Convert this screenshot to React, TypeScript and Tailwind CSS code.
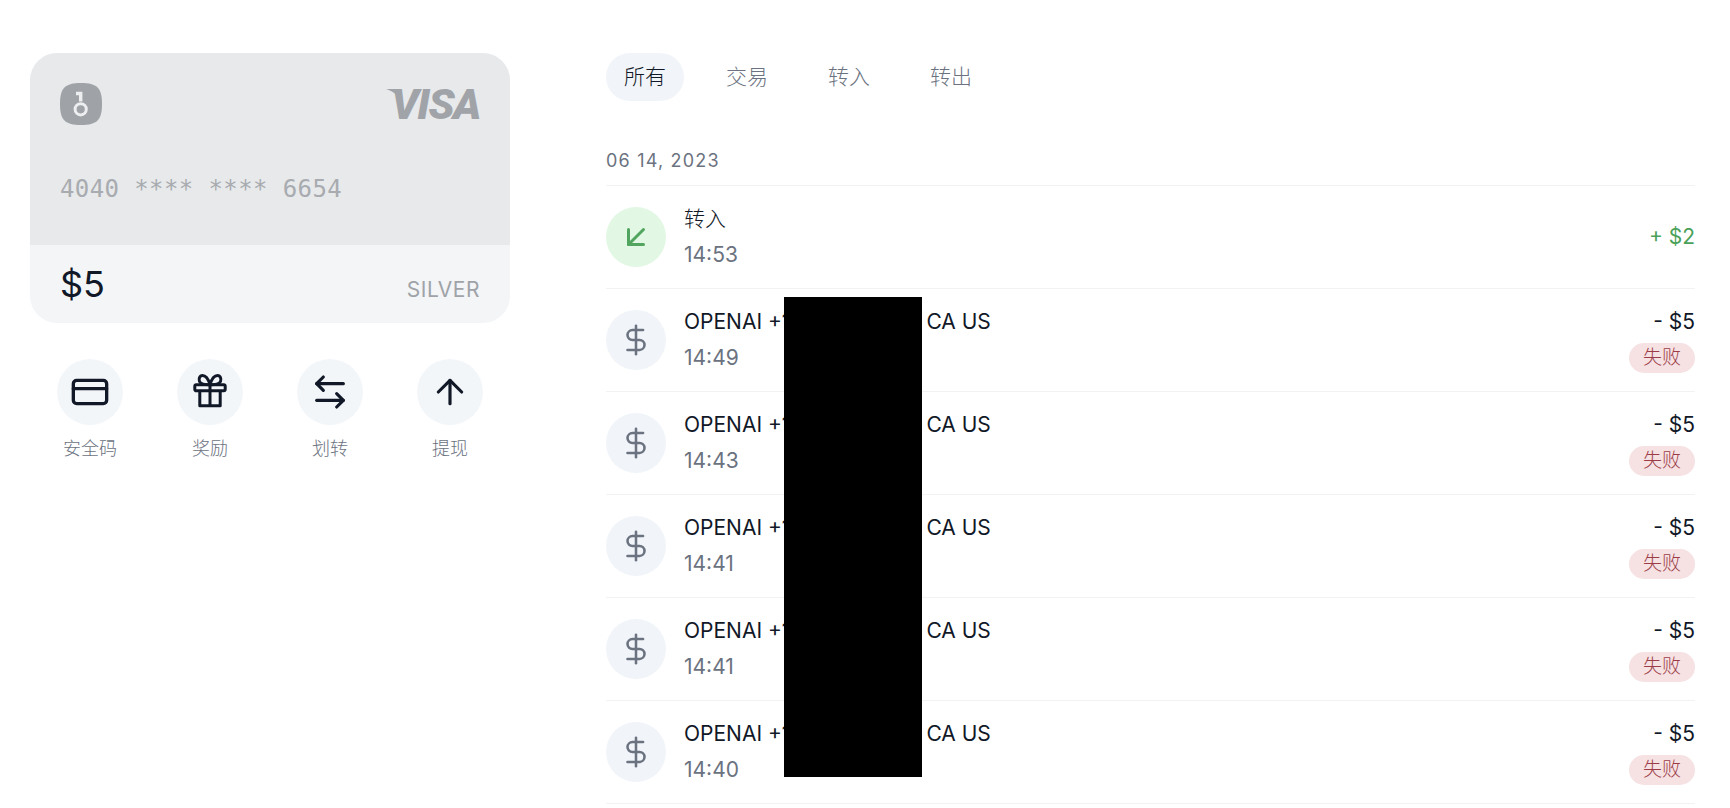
import { ArrowDownLeft, ArrowLeftRight, ArrowUp, CreditCard, DollarSign } from "lucide-react";

function GiftIcon({ className }: { size?: number; strokeWidth?: number; className?: string }) {
  return (
    <svg width="36" height="36" viewBox="0 0 36 36" fill="none" stroke="currentColor" strokeWidth="3" strokeLinejoin="round" className={className}>
      <rect x="2.8" y="10.8" width="30.4" height="6" rx="1.5" />
      <path d="M7.8 16.8V31.8H28.2V16.8" />
      <path d="M18 10.8V31.8" />
      <path d="M18 10.8C16 4 13 1.6 10.5 1.6C7.5 1.6 6.5 5 7.5 7.5C8.5 10 11 10.8 18 10.8Z" />
      <path d="M18 10.8C20 4 23 1.6 25.5 1.6C28.5 1.6 29.5 5 28.5 7.5C27.5 10 25 10.8 18 10.8Z" />
    </svg>
  );
}

const actions = [
  { label: "安全码", icon: CreditCard, stroke: 2 },
  { label: "奖励", icon: GiftIcon, stroke: 2 },
  { label: "划转", icon: ArrowLeftRight, stroke: 1.9 },
  { label: "提现", icon: ArrowUp, stroke: 1.9 },
];

const tabs = ["所有", "交易", "转入", "转出"];

const payments = ["14:49", "14:43", "14:41", "14:41", "14:40"];

function KeyLogo() {
  return (
    <svg width="42" height="42" viewBox="0 0 42 42" fill="none">
      <path d="M21 0C37 0 42 5 42 21C42 37 37 42 21 42C5 42 0 37 0 21C0 5 5 0 21 0Z" fill="#9fa2a6" />
      <path d="M16 10.5H20.7V18.6" stroke="#eceef0" strokeWidth="3.4" />
      <circle cx="20.7" cy="26.3" r="5.6" stroke="#eceef0" strokeWidth="3" />
    </svg>
  );
}

function Card() {
  return (
    <div className="h-[270px] w-[480px] overflow-hidden rounded-[27px]">
      <div className="h-[192px] bg-[#e7e9eb] px-[30px] pt-[30px]">
        <div className="flex items-start justify-between">
          <KeyLogo />
          <div className="relative mt-[-4px] h-[42px] w-[92px]">
            {/* swoosh on the V of the logo */}
            <svg width="14" height="10" viewBox="0 0 14 10" className="absolute top-[10px] left-[-2px]">
              <path d="M0 0H10L14 10C11 5 6 2 0 0Z" fill="#a0a3a8" />
            </svg>
            <span className="block text-right font-['Roboto',sans-serif] text-[43px] leading-[50px] font-black tracking-[-1.5px] text-[#a0a3a8] italic">
              VISA
            </span>
          </div>
        </div>
        <div className="mt-[49px] font-['DejaVu_Sans_Mono',monospace] text-[24px] leading-[30px] tracking-[0.4px] whitespace-pre text-[#a8abaf]">
          4040 **** **** 6654
        </div>
      </div>
      <div className="flex h-[78px] items-baseline justify-between bg-[#f3f5f7] px-[30px] pt-[15px]">
        <span className="text-[36px] leading-[48px] text-[#111827]">$5</span>
        <span className="text-[21px] tracking-[0.5px] text-[#9fa3a8]">SILVER</span>
      </div>
    </div>
  );
}

function ActionGrid() {
  return (
    <div className="mt-[36px] grid grid-cols-4">
      {actions.map((action) => (
        <div key={action.label} className="flex flex-col items-center">
          <div className="flex h-[66px] w-[66px] items-center justify-center rounded-full bg-[#f3f6f9]">
            <action.icon size={40} strokeWidth={action.stroke} className="text-[#111827]" />
          </div>
          <span className="mt-[11px] text-[18px] leading-[26px] font-light text-[#6b7280]">{action.label}</span>
        </div>
      ))}
    </div>
  );
}

function IncomeRow() {
  return (
    <div className="flex h-[103px] items-center border-b border-[#f0f2f4]">
      <div className="flex h-[60px] w-[60px] items-center justify-center rounded-full bg-[#e2f8e4]">
        <ArrowDownLeft size={36} strokeWidth={2} className="text-[#52a55f]" />
      </div>
      <div className="ml-[18px] flex-1 pb-px">
        <div className="text-[21px] leading-[30px] font-light text-[#111827]">转入</div>
        <div className="mt-[6px] text-[21px] leading-[30px] text-[#6b7280]">14:53</div>
      </div>
      <div className="text-[21px] text-[#4ba15a]">+ $2</div>
    </div>
  );
}

function PaymentRow({ time }: { time: string }) {
  return (
    <div className="flex h-[103px] items-center border-b border-[#f0f2f4]">
      <div className="flex h-[60px] w-[60px] items-center justify-center rounded-full bg-[#f1f4f8]">
        <DollarSign size={34} strokeWidth={1.8} className="text-[#6b7280]" />
      </div>
      <div className="ml-[18px] flex-1 pb-px">
        <div className="text-[21px] leading-[30px] whitespace-nowrap text-[#111827]">
          OPENAI +1<span className="inline-block w-[136px]" />CA US
        </div>
        <div className="mt-[6px] text-[21px] leading-[30px] text-[#6b7280]">{time}</div>
      </div>
      <div className="flex flex-col items-end pb-px">
        <div className="text-[21px] leading-[30px] text-[#111827]">- $5</div>
        <div className="mt-[6px] flex h-[30px] w-[66px] items-center justify-center rounded-full bg-[#f6e1e3] pt-[2px] text-[19px] font-light text-[#9b3c47]">
          失败
        </div>
      </div>
    </div>
  );
}

export default function App() {
  return (
    <div className="relative flex h-[808px] w-[1730px] gap-[96px] overflow-hidden bg-white pt-[53px] pl-[30px] font-['Inter','Noto_Sans_CJK_SC',sans-serif]">
      <div className="w-[480px]">
        <Card />
        <ActionGrid />
      </div>

      <div className="w-[1089px]">
        <div className="flex gap-[24px]">
          {tabs.map((tab, i) => (
            <div
              key={tab}
              className={`flex h-[48px] w-[78px] items-center justify-center rounded-full text-[21px] font-light ${
                i === 0 ? "bg-[#f1f4f8] text-[#111827]" : "text-[#6b7280]"
              }`}
            >
              {tab}
            </div>
          ))}
        </div>

        <div className="mt-[47px] border-b border-[#f0f2f4] pb-[11px] text-[18px] leading-[26px] tracking-[1.2px] text-[#6b7280]">
          06 14, 2023
        </div>

        <IncomeRow />
        {payments.map((time, i) => (
          <PaymentRow key={i} time={time} />
        ))}
      </div>

      {/* redaction bar from the screenshot */}
      <div className="absolute top-[297px] left-[784px] h-[480px] w-[138px] bg-black" />
    </div>
  );
}
